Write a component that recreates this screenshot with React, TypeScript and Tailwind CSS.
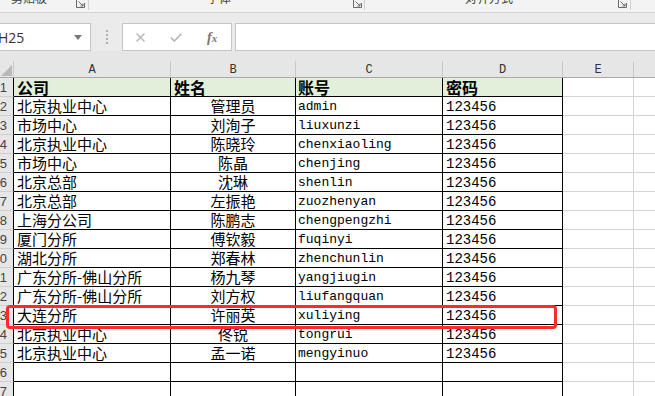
import React from "react";

const CJK = '"Noto Sans CJK SC", "Noto Sans", sans-serif';
const MONO = '"Liberation Mono", "Noto Sans CJK SC", monospace';

const rows: [string, string, string, string][] = [
  ["北京执业中心", "管理员", "admin", "123456"],
  ["市场中心", "刘洵子", "liuxunzi", "123456"],
  ["北京执业中心", "陈晓玲", "chenxiaoling", "123456"],
  ["市场中心", "陈晶", "chenjing", "123456"],
  ["北京总部", "沈琳", "shenlin", "123456"],
  ["北京总部", "左振艳", "zuozhenyan", "123456"],
  ["上海分公司", "陈鹏志", "chengpengzhi", "123456"],
  ["厦门分所", "傅钦毅", "fuqinyi", "123456"],
  ["湖北分所", "郑春林", "zhenchunlin", "123456"],
  ["广东分所-佛山分所", "杨九琴", "yangjiugin", "123456"],
  ["广东分所-佛山分所", "刘方权", "liufangquan", "123456"],
  ["大连分所", "许丽英", "xuliying", "123456"],
  ["北京执业中心", "佟锐", "tongrui", "123456"],
  ["北京执业中心", "孟一诺", "mengyinuo", "123456"],
  ["", "", "", ""],
  ["", "", "", ""],
];

function Launcher() {
  return (
    <svg width="9" height="9" viewBox="0 0 9 9">
      <path d="M0.5 0 V8.5 H8.5 V4" fill="none" stroke="#6b6b6b" strokeWidth="1" />
      <path d="M2.5 2.5 L7 7 M7 4.5 V7 H4.5" fill="none" stroke="#6b6b6b" strokeWidth="1" />
    </svg>
  );
}

function RowHead({ n }: { n: number }) {
  return (
    <div className="w-[14px] h-full shrink-0 flex justify-end items-center overflow-hidden bg-[#e6e6e6] border-r border-r-black border-b border-b-[#cfcfcf] pr-[6px] text-[13px] text-[#444]" style={{ fontFamily: '"Liberation Sans", sans-serif' }}>
      <span className="whitespace-nowrap leading-none">{n}</span>
    </div>
  );
}

export default function App() {
  return (
    <div className="w-[655px] h-[396px] overflow-hidden bg-white relative" style={{ fontFamily: CJK }}>
      {/* ribbon bottom */}
      <div className="h-[13px] bg-[#f3f3f3] border-b border-[#d4d4d4] flex overflow-hidden text-[12px] text-[#444]">
        <div className="w-[89px] shrink-0 flex items-start border-r border-[#cfcfcf] h-[10px]">
          <span className="pl-[11px] -mt-[9px] leading-[14px]">剪贴板</span>
          <div className="ml-auto mr-[3px] -mt-[1px]"><Launcher /></div>
        </div>
        <div className="w-[276px] shrink-0 flex items-start border-r border-[#cfcfcf] h-[10px]">
          <span className="pl-[118px] -mt-[9px] leading-[14px]">字体</span>
          <div className="ml-auto mr-[2px] -mt-[1px]"><Launcher /></div>
        </div>
        <div className="w-[266px] shrink-0 flex items-start border-r border-[#cfcfcf] h-[10px]">
          <span className="pl-[100px] -mt-[9px] leading-[14px]">对齐方式</span>
          <div className="ml-auto mr-[3px] -mt-[1px]"><Launcher /></div>
        </div>
      </div>

      {/* formula bar */}
      <div className="h-[38px] bg-[#ebebeb] pt-[10px] flex">
        <div className="w-[92px] h-[28px] shrink-0 -ml-[1px] bg-white border border-[#c6c6c6] flex items-center">
          <span className="-ml-[2px] text-[14px] text-[#333]" style={{ fontFamily: '"Open Sans", "Liberation Sans", sans-serif' }}>H25</span>
          <svg width="8" height="5" viewBox="0 0 8 5" className="ml-auto mr-[8px]">
            <path d="M0 0 H8 L4 5 Z" fill="#777" />
          </svg>
        </div>
        <div className="w-[31px] shrink-0 flex flex-col items-center justify-center gap-[2px]">
          <div className="w-[2px] h-[2px] bg-[#b0b0b0]" />
          <div className="w-[2px] h-[2px] bg-[#b0b0b0]" />
          <div className="w-[2px] h-[2px] bg-[#b0b0b0]" />
          <div className="w-[2px] h-[2px] bg-[#b0b0b0]" />
        </div>
        <div className="w-[110px] h-[28px] shrink-0 bg-white border border-[#c6c6c6] flex items-center">
          <svg width="9" height="9" viewBox="0 0 9 9" className="ml-[13px]">
            <path d="M0.5 0.5 L8.5 8.5 M8.5 0.5 L0.5 8.5" stroke="#b4b4b4" strokeWidth="1.3" />
          </svg>
          <svg width="12" height="9" viewBox="0 0 12 9" className="ml-[25px]">
            <path d="M0.8 4.5 L4.3 8 L11.3 0.8" fill="none" stroke="#b4b4b4" strokeWidth="1.6" />
          </svg>
          <span className="ml-[25px] text-[14px] italic text-[#777] font-bold" style={{ fontFamily: '"Liberation Serif", serif' }}>
            f<span className="text-[11px]">x</span>
          </span>
        </div>
        <div className="flex-1 h-[28px] ml-[3px] bg-white border-y border-l border-[#c6c6c6]" />
      </div>

      {/* column headers */}
      <div className="h-[27px] bg-[#e6e6e6] border-b border-[#a9a9a9] flex items-end text-[12px] text-[#333]" style={{ fontFamily: MONO }}>
        <div className="w-[14px] h-[16px] shrink-0 border-r border-[#c8c8c8] relative">
          <svg width="11" height="11" viewBox="0 0 11 11" className="absolute right-[1px] bottom-[1px]">
            <path d="M11 0 V11 H0 Z" fill="#b8b8b8" />
          </svg>
        </div>
        <div className="w-[157px] h-[16px] shrink-0 border-r border-[#c8c8c8] flex items-center justify-center pt-[2px]">A</div>
        <div className="w-[125px] h-[16px] shrink-0 border-r border-[#c8c8c8] flex items-center justify-center pt-[2px]">B</div>
        <div className="w-[147px] h-[16px] shrink-0 border-r border-[#c8c8c8] flex items-center justify-center pt-[2px]">C</div>
        <div className="w-[120px] h-[16px] shrink-0 border-r border-[#c8c8c8] flex items-center justify-center pt-[2px]">D</div>
        <div className="w-[71px] h-[16px] shrink-0 border-r border-[#c8c8c8] flex items-center justify-center pt-[2px]">E</div>
        <div className="flex-1 h-[16px]" />
      </div>

      {/* header row 1 */}
      <div className="h-[19px] flex">
        <RowHead n={1} />
        <div className="w-[157px] shrink-0 bg-[#e2efda] border-r border-b border-black pl-[3px] flex items-center text-[16px] font-bold leading-[18px] text-black">公司</div>
        <div className="w-[125px] shrink-0 bg-[#e2efda] border-r border-b border-black pl-[3px] flex items-center text-[16px] font-bold leading-[18px] text-black">姓名</div>
        <div className="w-[147px] shrink-0 bg-[#e2efda] border-r border-b border-black pl-[2px] flex items-center text-[16px] font-bold leading-[18px] text-black">账号</div>
        <div className="w-[120px] shrink-0 bg-[#e2efda] border-r border-b border-black pl-[3px] flex items-center text-[16px] font-bold leading-[18px] text-black">密码</div>
        <div className="w-[71px] shrink-0 border-r border-b border-[#d4d4d4]" />
        <div className="flex-1 border-b border-[#d4d4d4]" />
      </div>

      {rows.map((r, i) => (
        <div key={i} className="h-[19px] flex text-black">
          <RowHead n={i + 2} />
          <div className="w-[157px] shrink-0 border-r border-b border-black pl-[3px] flex items-center text-[15px] leading-[18px] whitespace-nowrap overflow-hidden">{r[0]}</div>
          <div className="w-[125px] shrink-0 border-r border-b border-black flex items-center justify-center text-[15px] leading-[18px]">{r[1]}</div>
          <div className="w-[147px] shrink-0 border-r border-b border-black pl-[2px] flex items-center text-[13px] leading-[18px] pt-[2px]" style={{ fontFamily: MONO }}>{r[2]}</div>
          <div className="w-[120px] shrink-0 border-r border-b border-black pl-[3px] flex items-center text-[14px] leading-[18px] pt-[2px]" style={{ fontFamily: MONO }}>{r[3]}</div>
          <div className="w-[71px] shrink-0 border-r border-b border-[#d4d4d4]" />
          <div className="flex-1 border-b border-[#d4d4d4]" />
        </div>
      ))}

      {/* highlight box */}
      <div className="absolute left-[6px] top-[305px] w-[551px] h-[24px] border-[3px] border-[#ff2a2a] rounded-[4px]" />
    </div>
  );
}
